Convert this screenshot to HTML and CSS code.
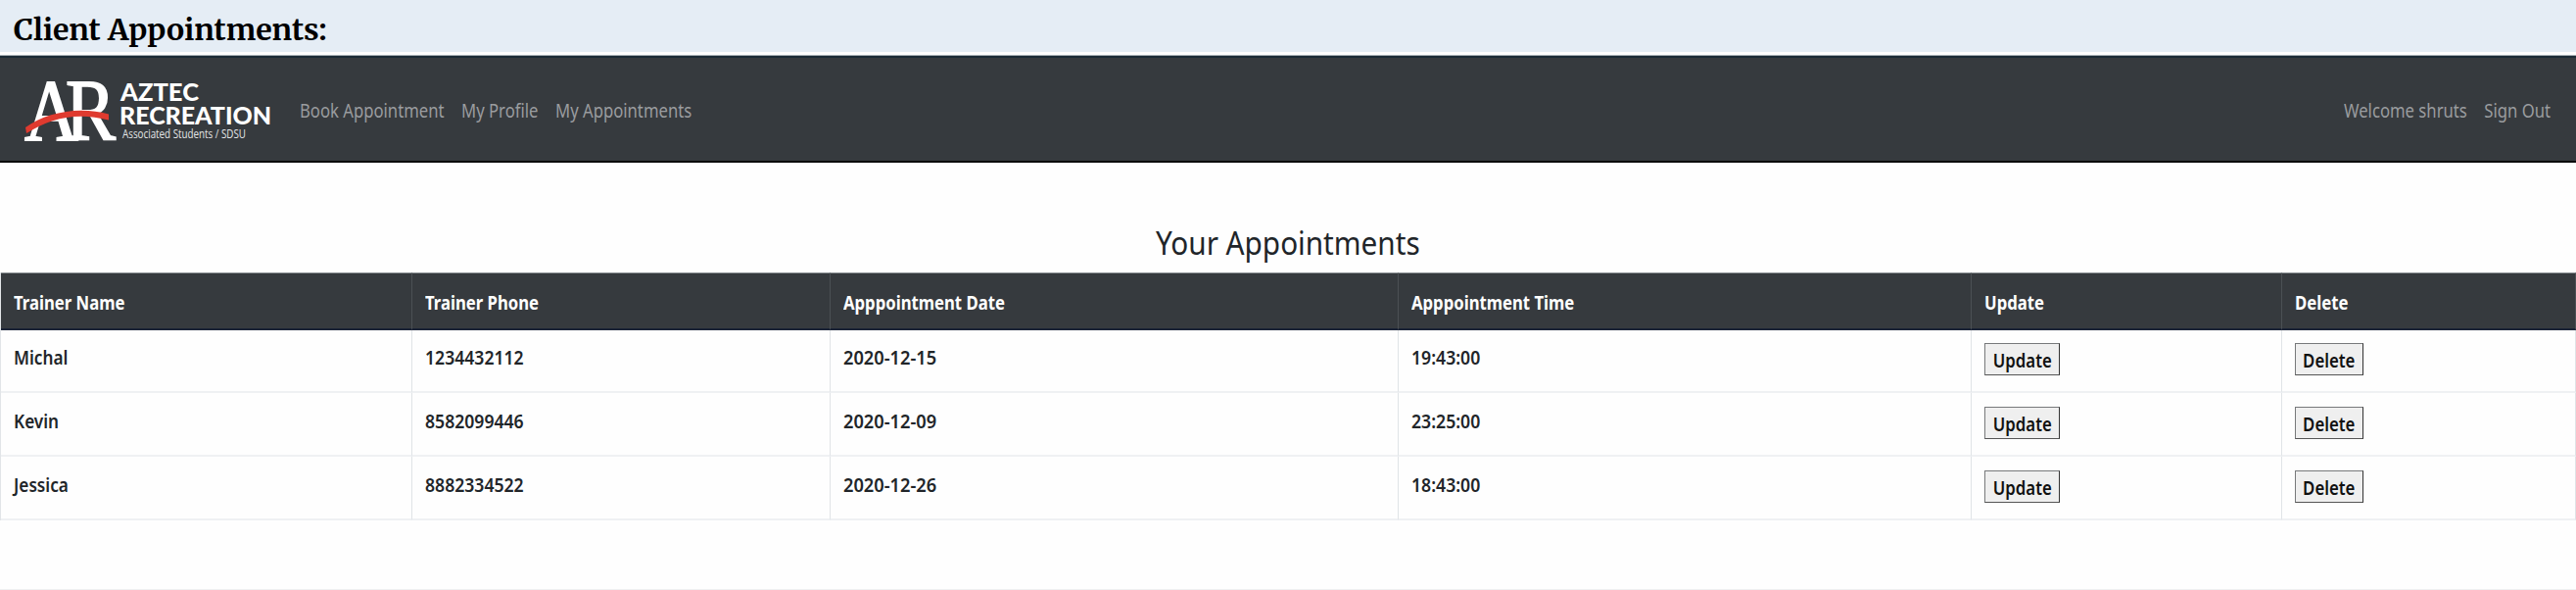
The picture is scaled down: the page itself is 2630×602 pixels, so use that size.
FILE: index.html
```
<!DOCTYPE html>
<html lang="en">
<head>
<meta charset="utf-8">
<title>Client Appointments</title>
<link rel="stylesheet" href="styles.css">
</head>
<body>
<h1 class="caption">Client Appointments:</h1>
<div class="page">
  <nav class="navbar">
    <svg class="logo" width="260" height="72" viewBox="20 75 260 72" role="img" aria-label="Aztec Recreation">
      <g class="monogram">
        <text x="25" y="141" textLength="55" lengthAdjust="spacingAndGlyphs">A</text>
        <text x="67" y="141" textLength="51" lengthAdjust="spacingAndGlyphs">R</text>
      </g>
      <path d="M26 129C47 114 80 107 111 115.500L111 121.500C79 113 52 119 27 135Z" fill="#df3a2f"/>
      <text class="brand" x="123" y="101.500" textLength="80" lengthAdjust="spacingAndGlyphs">AZTEC</text>
      <text class="brand" x="122" y="126" textLength="155" lengthAdjust="spacingAndGlyphs">RECREATION</text>
      <text class="tagline" x="125" y="139.500" textLength="126" lengthAdjust="spacingAndGlyphs">Associated Students / SDSU</text>
    </svg>
    <div class="links links-main"><a>Book Appointment</a><a>My Profile</a><a>My Appointments</a></div>
    <div class="links links-user"><a>Welcome shruts</a><a>Sign Out</a></div>
  </nav>
  <h2 class="heading"><span>Your Appointments</span></h2>
  <table class="grid">
    <colgroup><col class="c-name"><col class="c-phone"><col class="c-date"><col class="c-time"><col class="c-update"><col class="c-delete"></colgroup>
    <thead>
      <tr><th><span>Trainer Name</span></th><th><span>Trainer Phone</span></th><th><span>Apppointment Date</span></th><th><span>Apppointment Time</span></th><th><span>Update</span></th><th><span>Delete</span></th></tr>
    </thead>
    <tbody>
      <tr><td><span>Michal</span></td><td class="phone"><span>1234432112</span></td><td class="date"><span>2020-12-15</span></td><td class="time"><span>19:43:00</span></td><td><button class="b-update"><span>Update</span></button></td><td><button class="b-delete"><span>Delete</span></button></td></tr>
      <tr><td><span>Kevin</span></td><td class="phone"><span>8582099446</span></td><td class="date"><span>2020-12-09</span></td><td class="time"><span>23:25:00</span></td><td><button class="b-update"><span>Update</span></button></td><td><button class="b-delete"><span>Delete</span></button></td></tr>
      <tr><td><span>Jessica</span></td><td class="phone"><span>8882334522</span></td><td class="date"><span>2020-12-26</span></td><td class="time"><span>18:43:00</span></td><td><button class="b-update"><span>Update</span></button></td><td><button class="b-delete"><span>Delete</span></button></td></tr>
    </tbody>
  </table>
</div>
</body>
</html>
```
FILE: styles.css
```
* { box-sizing: border-box; }
body { margin: 0; height: 602px; overflow: hidden; background: #e5edf5; color: #212529; font-family: "Noto Sans", "Open Sans", sans-serif; }
.caption { margin: 0; height: 53px; padding-left: 14px; font: bold 30.3px/61px Merriweather, "Noto Serif", "DejaVu Serif", serif; color: #000; }
.page { height: 549px; padding-top: 4px; background: #fefefe; border-bottom: 1px solid #eff0f1; }
.navbar { display: flex; align-items: center; height: 109px; padding: 0 26px 0 20px; background: #363a3e; border-top: 2px solid #1c2b36; border-bottom: 2px solid #08090a; box-shadow: 0 -1px #a5adb2; }
.logo { flex: none; overflow: visible; }
.monogram { font: 88px "Liberation Serif", serif; fill: #fff; stroke: #fff; stroke-width: 1.8px; }
.brand { font: 900 24.500px Lato, sans-serif; fill: #fff; }
.tagline { font: 12px "Open Sans", sans-serif; fill: #e4e6e7; }
.links { display: flex; gap: 21px; padding-top: 3px; font-size: 20px; line-height: 30px; color: #9a9c9f; white-space: nowrap; transform: scaleX(.834); }
.links-main { margin-left: 26px; transform-origin: left; }
.links-user { margin-left: auto; transform-origin: right; }
.heading { margin: 0; height: 112px; padding-top: 57px; font-size: 33px; line-height: 50px; font-weight: 400; text-align: center; }
.heading span { display: inline-block; transform: scaleX(.9); }
.grid { width: 2630px; table-layout: fixed; border-collapse: separate; border-spacing: 0; border-left: 1px solid #e2e5e8; font-size: 20px; line-height: 31px; }
.c-name { width: 420px; }
.c-phone { width: 427px; }
.c-date { width: 580px; }
.c-time { width: 585px; }
.c-update { width: 317px; }
.c-delete { width: 300px; }
th, td { padding: 0 0 0 13px; text-align: left; vertical-align: top; white-space: nowrap; }
th { height: 59px; padding-top: 14px; background: #363a3e; color: #fff; border-top: 1px solid #8b9094; border-right: 1px solid #4b5054; border-bottom: 2px solid #1b2336; font-weight: 700; }
td { height: 65px; padding-top: 13px; border-right: 1px solid #e0e4e7; border-bottom: 2px solid #eff1f3; font-weight: 600; }
tbody tr:first-child td { height: 64px; padding-top: 12px; }
th span, td span { display: inline-block; transform: scaleX(.835); transform-origin: left; }
td span { transform: scaleX(.86); }
.phone span { transform: scaleX(.88); }
.date span { transform: scaleX(.912); }
.time span { transform: scaleX(.882); }
button { display: flex; align-items: center; justify-content: center; height: 33px; margin-top: 1px; padding: 2px 0 0; border: 1px solid #77797b; border-right-color: #333; border-bottom-color: #555; border-radius: 0; background: #efefef; color: #111; font: 600 20px/28px "Noto Sans", sans-serif; }
button span { flex: none; transform: scaleX(.84); transform-origin: center; }
.b-update { width: 77px; }
.b-delete { width: 70px; }
```
